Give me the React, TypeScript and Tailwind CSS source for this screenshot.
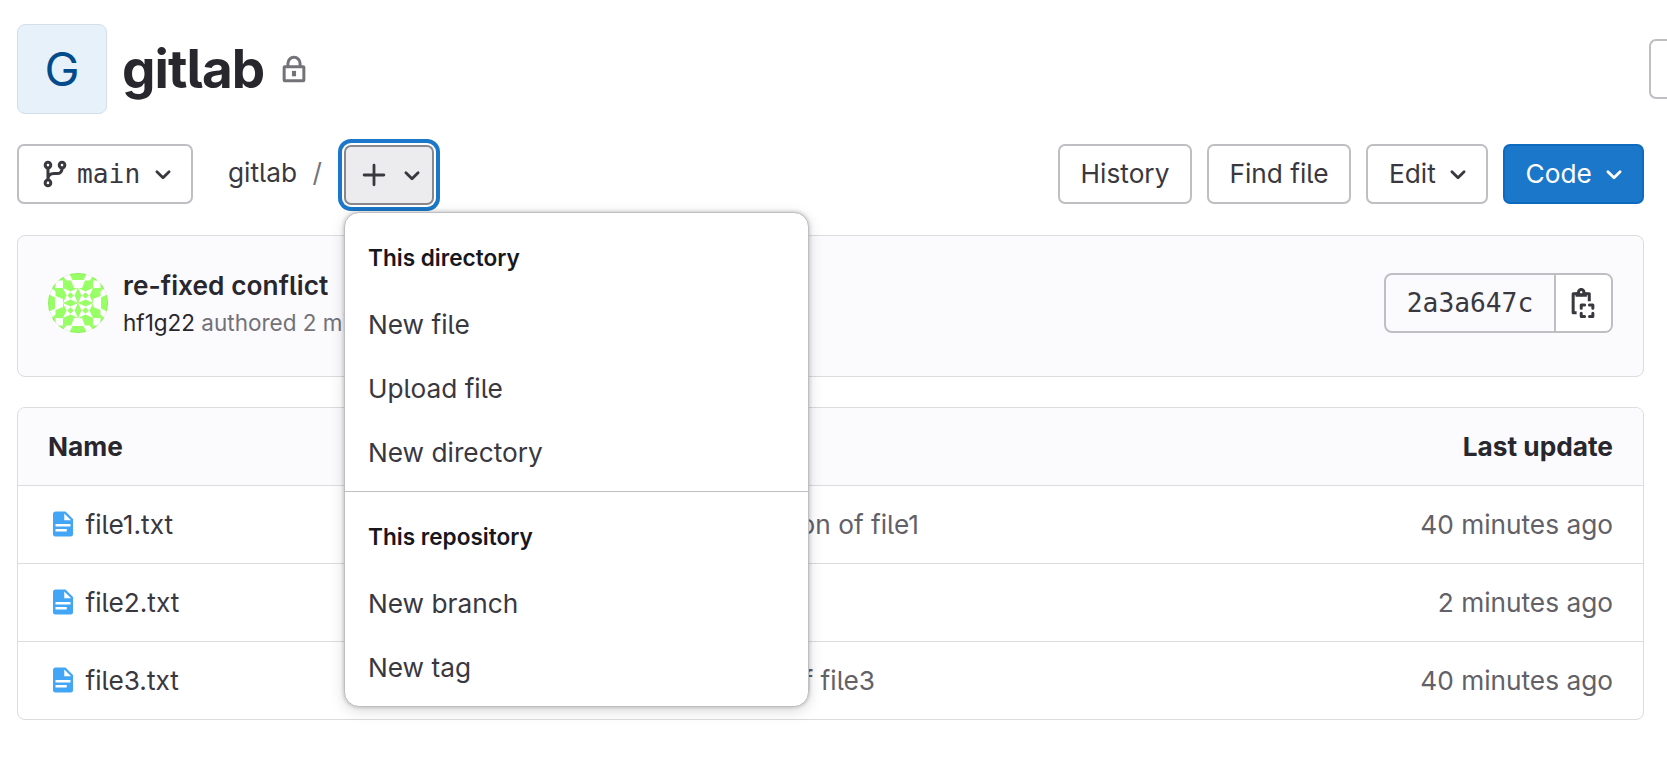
import type { ReactNode } from "react";

const sans = "font-['Inter','Liberation_Sans',sans-serif] [font-feature-settings:'cv05']";
const mono = "font-['DejaVu_Sans_Mono','Liberation_Mono',monospace]";

function Chevron() {
  return (
    <svg viewBox="0 0 16 16" className="size-[30px] shrink-0" fill="none" stroke="currentColor" strokeWidth="1.5" strokeLinecap="round" strokeLinejoin="round">
      <path d="M4.75 6.75 8 10l3.25-3.25" />
    </svg>
  );
}

function BranchIcon() {
  return (
    <svg viewBox="0 0 16 16" className="size-[30px] shrink-0" fill="none" stroke="currentColor" strokeWidth="1.6">
      <circle cx="4.25" cy="3.25" r="1.5" />
      <circle cx="4.25" cy="12.75" r="1.5" />
      <circle cx="11.75" cy="3.25" r="1.5" />
      <path d="M4.25 5v6M11.75 5c0 1.900-1 2.700-2.750 2.750H7.500C5.400 7.800 4.300 8.900 4.250 10.600" />
    </svg>
  );
}

function PlusIcon() {
  return (
    <svg viewBox="0 0 16 16" className="size-[30px] shrink-0" fill="none" stroke="currentColor" strokeWidth="1.5" strokeLinecap="round">
      <path d="M8 2.75v10.5M2.75 8h10.5" />
    </svg>
  );
}

function LockIcon() {
  return (
    <svg viewBox="0 0 16 16" className="size-[30px] shrink-0" fill="none" stroke="currentColor" strokeWidth="1.6">
      <rect x="2.75" y="6.75" width="10.5" height="7.5" rx="0.3" />
      <path d="M4.75 6.75V5a3.25 3.25 0 0 1 6.500 0v1.750" />
      <path d="M8 9v2.900" strokeWidth="2.200" />
    </svg>
  );
}

function CopyIcon() {
  return (
    <svg viewBox="0 0 16 16" className="size-[30px] shrink-0" fill="none" stroke="currentColor" strokeWidth="1.6">
      <path d="M4.6 13.150H2.750V3h2M9.400 3h1.950v4" strokeLinejoin="round" />
      <circle cx="7.05" cy="2.2" r="1.45" />
      <path d="M4.75 2.3v1.700h4.600V2.300" strokeWidth="1.4" />
      <path d="M7.05 10.8V9h1.800M11.450 9h1.800v1.800M13.250 13.400v1.800h-1.800M8.850 15.200h-1.800v-1.800" strokeLinecap="round" strokeLinejoin="round" />
    </svg>
  );
}

function FileIcon() {
  return (
    <svg viewBox="0 0 24 24" className="size-[30px] shrink-0" fill="#42a5f5">
      <path d="M13 9h5.5L13 3.5V9M6 2h8l6 6v12a2 2 0 0 1-2 2H6a2 2 0 0 1-2-2V4c0-1.11.89-2 2-2m9 16v-2H6v2h9m3-4v-2H6v2h12z" />
    </svg>
  );
}

function Identicon() {
  const quarter = (
    <g>
      <path d="M21 0h9.500v7h-6zM0 21v9.500h7v-6z" />
      <path d="M7 0h8v7.500H7zM0 7h7.500v8H0z" />
      <path d="M15 3.500l3.500 4H23L26 15H15zM3.500 15l4 3.500V23L15 26V15z" />
      <rect x="15" y="15" width="15.500" height="15.500" />
      <path fill="#fff" d="M15 15l7.500 3.500L30 15l-3.500 7.500L30 30l-7.500-3.500L15 30l3.500-7.500z" />
      <path d="M22.500 19.200l3.300 3.300-3.300 3.300-3.300-3.300z" />
    </g>
  );
  return (
    <svg viewBox="0 0 60 60" className="size-[60px] shrink-0 rounded-full bg-white" fill="#99ff66">
      {quarter}
      <g transform="matrix(-1 0 0 1 60 0)">{quarter}</g>
      <g transform="matrix(1 0 0 -1 0 60)">{quarter}</g>
      <g transform="matrix(-1 0 0 -1 60 60)">{quarter}</g>
      <circle cx="30" cy="30" r="29.500" fill="none" stroke="#000" strokeOpacity="0.08" />
    </svg>
  );
}

function Button({ className, children }: { className: string; children: ReactNode }) {
  return (
    <button className={`flex h-[60px] shrink-0 items-center rounded-[7px] border-2 ${className}`}>{children}</button>
  );
}

const files = [
  { name: "file1.txt", message: "Initial version of file1", updated: "40 minutes ago", width: "w-[719px]" },
  { name: "file2.txt", message: "", updated: "2 minutes ago", width: "w-[719px]" },
  { name: "file3.txt", message: "First version of file3", updated: "40 minutes ago", width: "w-[675px]" },
];

function MenuGroup({ title, items }: { title: string; items: string[] }) {
  return (
    <div className="flex flex-col">
      <h2 className="flex h-[60px] items-center text-[22.600px] font-semibold text-[#18171d]">{title}</h2>
      <ul className="mt-[6px]">
        {items.map((item) => (
          <li key={item} className="flex h-[63.750px] items-center">{item}</li>
        ))}
      </ul>
    </div>
  );
}

export default function App() {
  return (
    <div className={`h-[760px] w-[1667px] overflow-hidden bg-white pl-[17px] text-[26.250px] leading-[37px] text-[#3a383f] ${sans}`}>
      <header className="flex h-[144px] pt-[24px]">
        <div className="flex size-[90px] items-center justify-center rounded-[8px] border border-[#d3dfe9] bg-[#e7f1fa] pb-px text-[47px] text-[#034b8b]">G</div>
        <h1 className="ml-[15px] mt-[7px] text-[53px] leading-[76px] font-bold tracking-[-0.950px] text-[#28272d]">gitlab</h1>
        <span className="ml-[14.500px] mt-[30px] text-[#737278]">
          <LockIcon />
        </span>
        <div className="mt-[15px] ml-auto h-[60px] w-[18px] rounded-l-[7px] border-2 border-r-0 border-[#bfbfc3]" />
      </header>

      <div className="flex h-[60px] w-[1627px] items-center">
        <Button className="w-[176px] border-[#bfbfc3] pl-[21px]">
          <BranchIcon />
          <span className={`ml-[7px] ${mono}`}>main</span>
          <span className="ml-[8px]"><Chevron /></span>
        </Button>
        <div className="ml-[35px] flex w-[116px] pb-[3px]">
          <span>gitlab</span>
          <span className="ml-[15.500px] text-[#737278]">/</span>
        </div>
        <div className="relative h-[60px]">
          <Button className="mt-px w-[90px] border-[#89888d] bg-[#ececef] pl-[13px] shadow-[0_0_0_2px_#fff,0_0_0_6px_#1a77c9]">
            <PlusIcon />
            <span className="ml-[8px]"><Chevron /></span>
          </Button>
          <div className="absolute top-[68px] left-0 z-10 h-[495px] w-[465px] rounded-[15px] border border-[#bfbfc3] bg-white shadow-[0_0_4px_rgba(5,5,6,0.24),0_4px_15px_rgba(5,5,6,0.14)]">
            <div className="h-[279px] border-b border-[#bfbfc3] px-[23px] pt-[14px]">
              <MenuGroup title="This directory" items={["New file", "Upload file", "New directory"]} />
            </div>
            <div className="px-[23px] pt-[14px]">
              <MenuGroup title="This repository" items={["New branch", "New tag"]} />
            </div>
          </div>
        </div>
        <div className="ml-auto flex gap-[15px]">
          <Button className="w-[134px] justify-center border-[#bfbfc3] pb-[2px]">History</Button>
          <Button className="w-[144px] justify-center border-[#bfbfc3] pb-[2px]">Find file</Button>
          <Button className="w-[122px] border-[#bfbfc3] pb-[2px] pl-[21px]">
            Edit
            <span className="mt-[2px] ml-[7px]"><Chevron /></span>
          </Button>
          <Button className="w-[141px] border-[#0c6bbf] bg-[#1a77c9] pb-[2px] pl-[20.500px] text-white">
            Code
            <span className="mt-[2px] ml-[7px]"><Chevron /></span>
          </Button>
        </div>
      </div>

      <section className="mt-[31px] flex h-[142px] w-[1627px] rounded-[8px] border border-[#dcdcde] bg-[#fbfafd] pt-[37px] pr-[30px] pl-[30px]">
        <Identicon />
        <div className="ml-[15px] whitespace-nowrap">
          <p className="mt-[-6px] font-semibold tracking-[0.050px] text-[#28272d]">re-fixed conflict</p>
          <p className="text-[22.500px] text-[#737278]">
            <span className="text-[#28272d]">hf1g22</span> authored 2 minutes ago
          </p>
        </div>
        <div className="ml-auto flex h-[60px] w-[229px] overflow-hidden rounded-[8px] border-2 border-[#bfbfc3]">
          <span className={`flex w-[170px] items-center justify-center border-r-2 border-[#bfbfc3] ${mono}`}>2a3a647c</span>
          <button className="flex flex-1 items-center justify-center bg-white pr-px"><CopyIcon /></button>
        </div>
      </section>

      <section className="mt-[30px] w-[1627px] rounded-[8px] border border-[#dcdcde]">
        <div className="flex h-[77px] items-center justify-between rounded-t-[7px] bg-[#fbfafd] px-[30px] font-bold text-[#28272d]">
          <span>Name</span>
          <span>Last update</span>
        </div>
        {files.map((file) => (
          <div key={file.name} className="flex h-[78px] items-center border-t border-[#dcdcde] pr-[30px] pl-[30px]">
            <span className="pb-[2px]"><FileIcon /></span>
            <span className="ml-[7.500px] w-[114.500px]">{file.name}</span>
            <span className={`shrink-0 text-right whitespace-nowrap text-[#626168] ${file.width}`}>{file.message}</span>
            <span className="ml-auto text-[#626168]">{file.updated}</span>
          </div>
        ))}
      </section>
    </div>
  );
}
